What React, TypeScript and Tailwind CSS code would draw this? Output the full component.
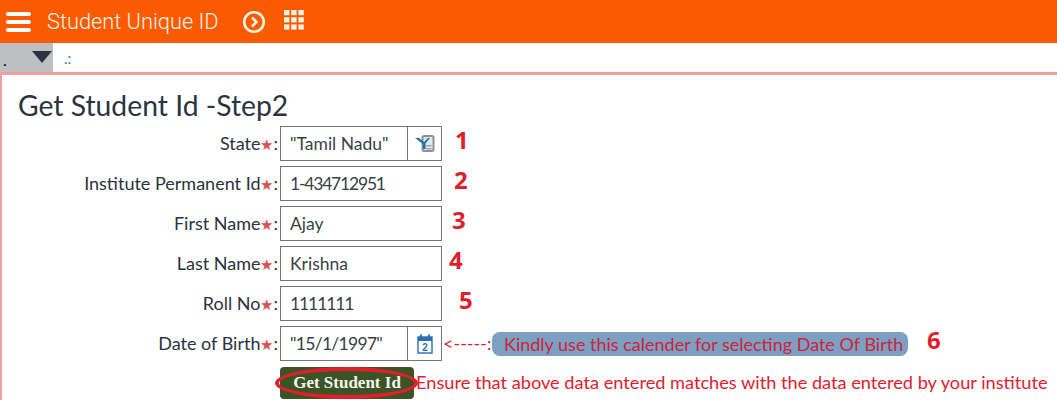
import { FC, ReactNode } from "react";

const Grid = () => (
  <svg width="20" height="20" viewBox="0 0 20 20" fill="#fff3e6">
    {[0, 7.2, 14.4].map((y) =>
      [0, 7.2, 14.4].map((x) => <rect key={`${x}-${y}`} x={x} y={y} width="5.4" height="5.2" />),
    )}
  </svg>
);

const FilterIcon = () => (
  <svg width="22" height="20" viewBox="0 0 22 20">
    <rect x="8.5" y="2" width="11" height="15" rx="1.5" fill="#e3e6e8" stroke="#8d9296" strokeWidth="2" />
    <rect x="12" y="11" width="5.5" height="1.5" fill="#a5aaae" />
    <rect x="12" y="14" width="5.5" height="1.5" fill="#a5aaae" />
    <path d="M1 4 L5 4 L10 8 L14 4 L16 4 L11.5 9.5 L11.5 15 L9 15 L9 10 Z" fill="#1f6fb2" />
  </svg>
);

const CalendarIcon = () => (
  <svg width="16" height="20" viewBox="0 0 16 20">
    <rect x="1" y="3" width="14" height="16" fill="#fff" stroke="#2a6fb0" strokeWidth="1.4" />
    <rect x="1" y="3" width="14" height="4" fill="#2a6fb0" />
    <rect x="3" y="0.5" width="2" height="4" fill="#2a6fb0" />
    <rect x="11" y="0.5" width="2" height="4" fill="#2a6fb0" />
    <text x="8" y="17" textAnchor="middle" fontSize="10" fontWeight="700" fill="#2a6fb0" fontFamily="Liberation Sans, sans-serif">
      2
    </text>
  </svg>
);

interface RowProps {
  label: string;
  value: string;
  step: string;
  stepClass: string;
  valueClass?: string;
  icon?: ReactNode;
  children?: ReactNode;
}

const Row: FC<RowProps> = (props) => (
  <div className="flex items-center h-[35px] mb-[5px]">
    <div className="w-[278px] pr-[2px] flex justify-end text-[18px] leading-[26px] text-[#2b3340] whitespace-nowrap">
      {props.label}
      <span className="text-[#d9534f] text-[15px] leading-[28px]">★</span>:
    </div>
    <div className="w-[162px] h-[35px] border border-[#767676] flex items-center shrink-0">
      <div className={`flex-1 pl-[9px] pt-[2px] text-[17.5px] text-[#3a3f47] whitespace-nowrap ${props.valueClass ?? ""}`}>
        {props.value}
      </div>
      {props.icon && (
        <div className="w-[34px] h-full border-l border-[#767676] flex items-center justify-center">{props.icon}</div>
      )}
    </div>
    {props.children}
    <div className={`-mt-[8px] text-[24px] font-bold leading-none text-[#e01f2d] font-['Open_Sans',sans-serif] ${props.stepClass}`}>
      {props.step}
    </div>
  </div>
);

export default function App() {
  return (
    <div className="w-[1057px] h-[400px] overflow-hidden bg-white font-['Lato',sans-serif]">
      <header className="h-[43px] bg-[#fb5b00] flex items-center text-[#fff3e6]">
        <div className="ml-[6px] w-[25px] flex flex-col gap-[4px]">
          <span className="h-[4px] rounded-full bg-white" />
          <span className="h-[4px] rounded-full bg-white" />
          <span className="h-[4px] rounded-full bg-white" />
        </div>
        <div className="ml-[16px] pt-[2px] text-[21.8px] font-['Roboto',sans-serif] font-light whitespace-nowrap">Student Unique ID</div>
        <svg className="ml-[23px]" width="24" height="24" viewBox="0 0 24 24" fill="none" stroke="#fff3e6" strokeWidth="2.6">
          <circle cx="12" cy="12" r="9.8" />
          <path d="M10 7.5 L14.5 12 L10 16.5" />
        </svg>
        <div className="ml-[18px] -mt-[4px]">
          <Grid />
        </div>
      </header>

      <div className="h-[29px] flex">
        <div className="w-[53px] bg-[#bdbfc2] relative">
          <span className="absolute left-[3px] bottom-[4px] text-[16px] leading-none text-black">.</span>
          <div className="absolute left-[32px] top-[8px] w-0 h-0 border-l-[10px] border-r-[10px] border-t-[12px] border-l-transparent border-r-transparent border-t-[#2b3340]" />
        </div>
        <div className="ml-[11px] mt-[4px] text-[15px] text-[#4a78a8]">.:</div>
      </div>

      <main className="h-[328px] border-t-[3px] border-l-2 border-[#f0a09a] pt-[12px]">
        <h1 className="pl-[16px] text-[28.3px] leading-[36px] h-[39px] text-[#2b3340]">Get Student Id -Step2</h1>
        <Row label="State" value={'"Tamil Nadu"'} step="1" stepClass="ml-[13px]" icon={<FilterIcon />} />
        <Row label="Institute Permanent Id" value="1-434712951" valueClass="tracking-[-1.2px]" step="2" stepClass="ml-[12px]" />
        <Row label="First Name" value="Ajay" step="3" stepClass="ml-[10px]" />
        <Row label="Last Name" value="Krishna" step="4" stepClass="ml-[7px]" />
        <Row label="Roll No" value="1111111" valueClass="tracking-[-1.1px]" step="5" stepClass="ml-[17px]" />
        <Row label="Date of Birth" value={'"15/1/1997"'} valueClass="tracking-[-0.7px]" step="6" stepClass="ml-[19px]" icon={<CalendarIcon />}>
          <span className="ml-[1px] w-[48px] text-[18px] text-[#d8232f] whitespace-nowrap">{"<-----:"}</span>
          <span className="ml-[1px] h-[24px] w-[416px] rounded-[8px] bg-[#7ba0c4] pl-[12px] text-[18px] leading-[24px] text-[#cf2338] whitespace-nowrap">
            Kindly use this calender for selecting Date Of Birth
          </span>
        </Row>
        <div className="flex items-center h-[33px]">
          <div className="ml-[278px] relative w-[134px] h-[32px] rounded-[4px] bg-[#3c5325] flex items-center justify-center">
            <span className="font-['Liberation_Serif',serif] font-bold text-[17px] text-[#f4f6ee] whitespace-nowrap">Get Student Id</span>
            <div className="absolute left-[-5px] top-[0px] w-[143px] h-[32px] rounded-[50%] border-[4px] border-[#e01f2d]" />
          </div>
          <span className="ml-[2px] text-[18.2px] text-[#e0202e] whitespace-nowrap">
            Ensure that above data entered matches with the data entered by your institute
          </span>
        </div>
      </main>
    </div>
  );
}
